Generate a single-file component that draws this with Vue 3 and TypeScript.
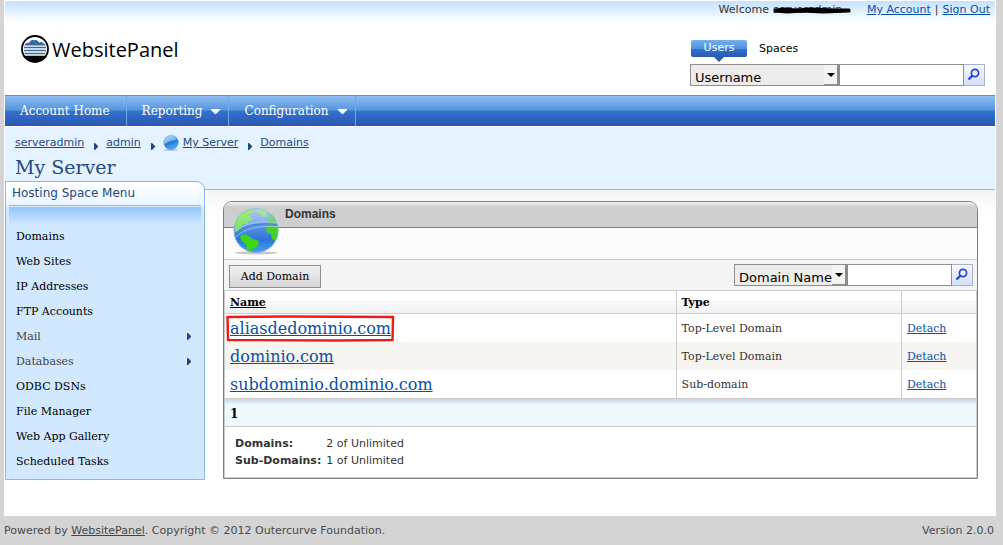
<script setup lang="ts">
import { ref } from 'vue'

interface MenuItem {
  label: string
  children?: boolean
}

interface DomainRow {
  name: string
  type: string
  marked?: boolean
}

const navItems: MenuItem[] = [
  { label: 'Account Home' },
  { label: 'Reporting', children: true },
  { label: 'Configuration', children: true },
]

const crumbs: string[] = ['serveradmin', 'admin', 'My Server', 'Domains']

const spaceMenu: MenuItem[] = [
  { label: 'Domains' },
  { label: 'Web Sites' },
  { label: 'IP Addresses' },
  { label: 'FTP Accounts' },
  { label: 'Mail', children: true },
  { label: 'Databases', children: true },
  { label: 'ODBC DSNs' },
  { label: 'File Manager' },
  { label: 'Web App Gallery' },
  { label: 'Scheduled Tasks' },
]

const domains: DomainRow[] = [
  { name: 'aliasdedominio.com', type: 'Top-Level Domain', marked: true },
  { name: 'dominio.com', type: 'Top-Level Domain' },
  { name: 'subdominio.dominio.com', type: 'Sub-domain' },
]

const userField = ref('Username')
const userQuery = ref('')
const domainField = ref('Domain Name')
const domainQuery = ref('')
</script>

<template>
  <div class="page">
    <div class="sheet">
      <header class="top">
        <div class="account">
          <span>Welcome</span>
          <span class="user">serveradmin
            <svg class="scribble" viewBox="0 0 78 8" aria-hidden="true">
              <path d="M2 4L12 3L22 4L40 3L60 4L76 4M2 5L14 6L30 5L50 6L76 5" fill="none" stroke="#000" stroke-width="3" stroke-linecap="round" />
            </svg>
          </span>
          <a href="#" class="first">My Account</a>
          <span class="bar">|</span>
          <a href="#">Sign Out</a>
        </div>
        <div class="brandrow">
          <a href="#" class="logo">
            <svg width="28" height="28" viewBox="0 0 28 28" aria-hidden="true">
              <circle cx="14" cy="14" r="13" fill="#fff" />
              <path d="M3.500 10.500C4 8.500 6 7.500 8 8C9 5.500 11 4.500 13 5.500C15 4.500 17 5.500 18 7.500C20 6.500 22 7 22.500 8.500C24 8.500 24.500 9.500 24.500 10.500Z" fill="#356b9f" />
              <path d="M3 12.500H25M3 15.500H25M3.500 18.500H24.500" stroke="#356b9f" stroke-width="1.500" />
              <path d="M2 20.800H26C23.500 25 19 27 14 27S4.500 25 2 20.800Z" fill="#000" />
              <circle cx="14" cy="14" r="13" fill="none" stroke="#000" stroke-width="1.800" />
            </svg>
            <span>WebsitePanel</span>
          </a>
          <div class="finder">
            <div class="tabs">
              <button type="button" class="tab on">Users</button>
              <button type="button" class="tab">Spaces</button>
            </div>
            <form class="search wide" @submit.prevent>
              <span class="pick">
                <select v-model="userField" aria-label="Search users by">
                  <option>Username</option>
                </select>
                <i class="drop"></i>
              </span>
              <input v-model="userQuery" type="text" aria-label="User search text">
              <button type="submit" class="go" aria-label="Search users">
                <svg width="14" height="14" viewBox="0 0 14 14"><path d="M5.500 7.500L1.500 11.500" stroke="#2344dc" stroke-width="2.400" /><circle cx="8" cy="5" r="3.600" fill="#eef4ff" stroke="#2344dc" stroke-width="1.700" /></svg>
              </button>
            </form>
          </div>
        </div>
      </header>

      <nav class="nav">
        <a v-for="item in navItems" :key="item.label" href="#">
          {{ item.label }}
          <svg v-if="item.children" width="9" height="5" viewBox="0 0 9 5" aria-hidden="true"><path d="M0 0H9V1L5 5H4L0 1Z" fill="#fff" /></svg>
        </a>
      </nav>

      <section class="heading">
        <div class="crumbs">
          <template v-for="(crumb, i) in crumbs" :key="crumb">
            <svg v-if="i > 0" class="sep" width="4" height="7" viewBox="0 0 4 7" aria-hidden="true"><path d="M0 0H1L4 3V4L1 7H0Z" fill="#1f4a80" /></svg>
            <svg v-if="crumb === 'My Server'" class="orb" width="16" height="16" viewBox="0 0 16 16" aria-hidden="true">
              <defs>
                <linearGradient id="orbFill" x1="0" y1="0" x2="0.400" y2="1"><stop offset="0" stop-color="#a9d4f7" /><stop offset="0.500" stop-color="#4596e4" /><stop offset="0.550" stop-color="#1e78d6" /><stop offset="1" stop-color="#55a8f0" /></linearGradient>
              </defs>
              <ellipse cx="8" cy="15" rx="7" ry="1" fill="#b9cbdc" />
              <circle cx="8" cy="7.500" r="7.500" fill="url(#orbFill)" />
              <path d="M1 8C1 4 4 1 8 1C11 1 13 2.500 14 5C10 5 5 6 1 10Z" fill="#fff" opacity="0.300" />
            </svg>
            <a href="#">{{ crumb }}</a>
          </template>
        </div>
        <h1>My Server</h1>
      </section>

      <div class="columns">
        <aside class="side">
          <h2>Hosting Space Menu</h2>
          <ul>
            <li v-for="item in spaceMenu" :key="item.label">
              <a href="#" :class="{ parent: item.children }">
                {{ item.label }}
                <svg v-if="item.children" width="4" height="7" viewBox="0 0 4 7" aria-hidden="true"><path d="M0 0H1L4 3V4L1 7H0Z" fill="#1f4a80" /></svg>
              </a>
            </li>
          </ul>
        </aside>

        <main class="content">
          <div class="panel">
            <div class="panelhead">
              <svg class="globe" width="48" height="48" viewBox="0 0 48 48" aria-hidden="true">
                <defs>
                  <linearGradient id="sea" x1="0" y1="0" x2="0" y2="1"><stop offset="0" stop-color="#86b0e4" /><stop offset="0.400" stop-color="#5a96e0" /><stop offset="0.700" stop-color="#2b74da" /><stop offset="1" stop-color="#4fa0ee" /></linearGradient>
                  <linearGradient id="shine" x1="0" y1="0" x2="0" y2="1"><stop offset="0" stop-color="#fff" stop-opacity="0.350" /><stop offset="1" stop-color="#fff" stop-opacity="0.100" /></linearGradient>
                  <clipPath id="ball"><circle cx="24" cy="23.500" r="22.500" /></clipPath>
                </defs>
                <ellipse cx="24" cy="45.800" rx="22" ry="1.600" fill="#c9c9c9" />
                <g clip-path="url(#ball)">
                  <circle cx="24" cy="23.500" r="22.500" fill="url(#sea)" />
                  <path d="M3 23L2 14L8 6L16 2L22 3L20 6L16 7L19 10L21 13L17 14L15 17L11 17L9 21L5 26Z" fill="#6bdf48" />
                  <path d="M25 2L32 2L37 5L33 6L35 9L31 10L29 7L26 6Z" fill="#7ddc6a" />
                  <path d="M36 12L39 11L36 8L40 7L44 12L47 20L47 29L43 34L40 32L39 27L35 26L34 20L37 16Z" fill="#47cf28" />
                  <path d="M8 29L12 27L17 29L21 32L27 34L26 39L21 42L18 45L15 43L14 37L9 33Z" fill="#3dd514" />
                  <path d="M0 28C8 17 28 14 48 18V0H0Z" fill="url(#shine)" />
                  <path d="M1 30C9 18 28 15 48 18" fill="none" stroke="#4a84da" stroke-width="1.400" />
                  <path d="M1 27C9 16 28 13 47 16M2 32C11 21 28 18 47 20" fill="none" stroke="#a9cbf6" stroke-width="1" stroke-opacity="0.700" />
                </g>
                <circle cx="24" cy="23.500" r="22" fill="none" stroke="#8fb6e4" stroke-opacity="0.700" />
              </svg>
              <h2>Domains</h2>
            </div>
            <div class="strip"></div>
            <div class="toolbar">
              <button type="button" class="add">Add Domain</button>
              <form class="search" @submit.prevent>
                <span class="pick">
                  <select v-model="domainField" aria-label="Search domains by">
                    <option>Domain Name</option>
                  </select>
                  <i class="drop"></i>
                </span>
                <input v-model="domainQuery" type="text" aria-label="Domain search text">
                <button type="submit" class="go" aria-label="Search domains">
                  <svg width="14" height="14" viewBox="0 0 14 14"><path d="M5.500 7.500L1.500 11.500" stroke="#2344dc" stroke-width="2.400" /><circle cx="8" cy="5" r="3.600" fill="#eef4ff" stroke="#2344dc" stroke-width="1.700" /></svg>
                </button>
              </form>
            </div>
            <div class="inner">
              <table class="grid">
                <thead>
                  <tr>
                    <th class="cname"><a href="#">Name</a></th>
                    <th class="ctype">Type</th>
                    <th class="cact"></th>
                  </tr>
                </thead>
                <tbody>
                  <tr v-for="row in domains" :key="row.name">
                    <td class="cname">
                      <span class="entry">
                        <a href="#">{{ row.name }}</a>
                        <svg v-if="row.marked" class="mark" viewBox="0 0 168 27" preserveAspectRatio="none" aria-hidden="true"><path d="M1.500 2L60 1.500L166 2L165.500 25L110 25.500L2 25Z" fill="none" stroke="#f01818" stroke-width="2.400" /></svg>
                      </span>
                    </td>
                    <td>{{ row.type }}</td>
                    <td><a href="#">Detach</a></td>
                  </tr>
                </tbody>
              </table>
              <div class="pager">1</div>
              <dl class="quota">
                <dt>Domains:</dt>
                <dd>2 of Unlimited</dd>
                <dt>Sub-Domains:</dt>
                <dd>1 of Unlimited</dd>
              </dl>
            </div>
          </div>
        </main>
      </div>
    </div>

    <footer class="foot">
      <span>Powered by <a href="#">WebsitePanel</a>. Copyright © 2012 Outercurve Foundation.</span>
      <span>Version 2.0.0</span>
    </footer>
  </div>
</template>

<style>
html,
body {
  background: #d4d4d4;
}
</style>

<style scoped>
* {
  box-sizing: border-box;
}

.page {
  font: 11px/16px "DejaVu Sans", Verdana, sans-serif;
  color: #333;
  background: #d4d4d4;
}

h1,
h2,
ul,
dl,
dd {
  margin: 0;
  padding: 0;
  font-weight: normal;
}

button,
input,
select {
  margin: 0;
  padding: 0;
  border: 0;
  border-radius: 0;
  font: inherit;
  color: #000;
}

a {
  color: #0850a4;
}

.sheet {
  margin: 0 7px 0 4px;
  padding: 1px 1px 36px;
  background: #fff;
}

.top {
  height: 94px;
  padding: 1px 10px 0 16px;
  background: linear-gradient(#c3e1ff, #fff 21px);
}

.account {
  display: flex;
  justify-content: flex-end;
  padding-right: 5px;
  margin-right: -10px;
}

.user {
  position: relative;
  width: 78px;
  margin-left: 4px;
  white-space: nowrap;
}

.scribble {
  position: absolute;
  left: 0;
  top: 4px;
  width: 78px;
  height: 8px;
}

.account .first {
  margin-left: 16px;
}

.bar {
  margin: 0 4px;
}

.brandrow {
  display: flex;
  justify-content: space-between;
  padding-top: 17px;
}

.logo {
  display: flex;
  align-self: flex-start;
  gap: 3px;
  font: 20px/30px "Open Sans", sans-serif;
  color: #000;
  text-decoration: none;
}

.finder {
  padding-top: 5px;
}

.tabs {
  display: flex;
  gap: 12px;
  height: 24px;
  padding-left: 1px;
}

.tab {
  height: 18px;
  background: none;
}

.tab.on {
  position: relative;
  width: 56px;
  height: 17px;
  padding-bottom: 2px;
  border-radius: 2px;
  color: #fff;
  background: linear-gradient(#79afec, #4f92df 50%, #3172cb 51%, #2b59b4);
}

.tab.on::after {
  content: "";
  position: absolute;
  left: 23px;
  top: 17px;
  border: 5px solid transparent;
  border-top-color: #2b59b4;
  border-bottom: 0;
}

.search {
  display: flex;
  height: 22px;
}

.pick {
  position: relative;
  display: block;
  width: 114px;
}

.wide .pick {
  width: 150px;
}

.pick select {
  width: 100%;
  height: 22px;
  padding: 5px 0 0 4px;
  border: 1px solid #8e8e8e;
  font-size: 13px;
  background: #edecea;
  appearance: none;
}

.drop {
  position: absolute;
  right: 0;
  top: 1px;
  width: 16px;
  height: 20px;
  border: solid #8d8b86;
  border-width: 0 3px 1px 0;
  background: #f5f4f2;
  pointer-events: none;
}

.drop::after {
  content: "";
  position: absolute;
  left: 3px;
  top: 8px;
  border: 4px solid transparent;
  border-top-color: #000;
  border-bottom: 0;
}

.search input {
  width: 104px;
  padding: 0 3px;
  border: 1px solid #8e8e8e;
  border-left: 0;
  background: #fff;
}

.wide input {
  width: 124px;
}

.go {
  display: grid;
  place-items: center;
  width: 21px;
  border: 1px solid #a9b2cc;
  border-left: 0;
  background: linear-gradient(#f6f8ff, #d7def7);
}

.nav {
  display: flex;
  height: 31px;
  border-top: 1px solid #4d92dc;
  background: linear-gradient(#8dbdf0, #5594df 48%, #3374cd 49%, #2a55b1);
}

.nav a {
  display: flex;
  align-items: center;
  gap: 9px;
  padding: 0 8px 0 15px;
  border-right: 1px solid #6fa8e6;
  font: 12px/20px "DejaVu Serif", serif;
  color: #fff;
  text-decoration: none;
}

.nav a:first-child {
  padding-right: 16px;
}

.heading {
  height: 63px;
  margin-top: 1px;
  padding: 8px 10px 0;
  border-bottom: 1px solid #84b9f5;
  background: #e5f2ff;
}

.crumbs {
  display: flex;
  align-items: center;
}

.crumbs a {
  color: #1f4a80;
}

.sep {
  margin: 6px 8px 0 10px;
}

.orb {
  margin-right: 4px;
}

h1 {
  font: 19px/26px "DejaVu Serif", serif;
  padding-top: 3px;
  color: #1f4a80;
}

.columns {
  display: flex;
  align-items: flex-start;
}

.side {
  flex: 0 0 200px;
  margin-top: -9px;
  padding: 0 3px 5px;
  border: 1px solid #84b9f5;
  border-top-right-radius: 9px;
  background: linear-gradient(#fff, #e9f4ff 24px, #d1e8ff 25px);
}

.side h2 {
  height: 24px;
  padding-left: 3px;
  border-bottom: 1px solid #84b9f5;
  font-size: 12px;
  line-height: 23px;
  color: #1f4a80;
}

.side ul {
  margin-top: 1px;
  padding-top: 17px;
  list-style: none;
  background: linear-gradient(#93c6fb, #d1e8ff 18px);
}

.side li a {
  display: flex;
  align-items: center;
  justify-content: space-between;
  padding: 0 10px 0 7px;
  font: 11px/25px "DejaVu Serif", serif;
  color: #000;
  text-decoration: none;
}

.side li a.parent {
  color: #444;
}

.content {
  flex: 1;
  margin-left: 3px;
  padding: 11px 17px 0 15px;
  background: linear-gradient(#f3f3f3, #fff 22px);
}

.panel {
  border: 1px solid #7f7f7f;
  border-radius: 9px 9px 0 0;
}

.panelhead {
  position: relative;
  height: 26px;
  padding-left: 61px;
  border-bottom: 1px solid #7f7f7f;
  border-radius: 8px 8px 0 0;
  background: linear-gradient(#f2f2f2, #cecece 5px);
}

.panelhead h2 {
  font: bold 12px/24px "Liberation Sans", Arial, sans-serif;
}

.globe {
  position: absolute;
  left: 8px;
  top: 5px;
}

.strip {
  height: 32px;
  border-bottom: 1px solid #ccc;
  background: #fcfcfc;
}

.toolbar {
  display: flex;
  justify-content: space-between;
  align-items: flex-start;
  height: 30px;
  padding: 4px 4px 0 5px;
  background: #f4f4f4;
}

.add {
  width: 92px;
  height: 23px;
  margin-top: 1px;
  padding-top: 1px;
  border: 1px solid #8e8e8e;
  font: 11px/20px "DejaVu Serif", serif;
  background: linear-gradient(#f1f1f1, #d6d6d6);
}

.inner {
  border: 1px solid #ccc;
}

.grid {
  width: 100%;
  border-collapse: separate;
  border-spacing: 0;
  table-layout: fixed;
  font: 11px/20px "DejaVu Serif", serif;
  background: #fff;
}

.grid th {
  height: 23px;
  padding: 2px 5px 0;
  border-bottom: 1px solid #ccc;
  text-align: left;
  color: #000;
  background: linear-gradient(#fff 40%, #f8f9fb 41%, #f0f1f3);
}

.grid th a {
  color: #000;
}

.grid td {
  height: 28px;
  padding: 2px 5px 0;
}

.grid th + th,
.grid td + td {
  border-left: 1px solid #ccc;
}

.grid .ctype {
  width: 30%;
}

.grid .cact {
  width: 10%;
}

.grid tbody tr:nth-child(even) {
  background: #f7f5f1;
}

.grid td.cname {
  font-size: 16px;
}

.entry {
  position: relative;
  display: inline-block;
}

.mark {
  position: absolute;
  left: -4px;
  top: -4px;
  width: calc(100% + 8px);
  height: 27px;
}

.pager {
  height: 29px;
  padding: 1px 5px 0;
  border: solid #ccc;
  border-width: 1px 0;
  font: bold 12px/28px "DejaVu Serif", serif;
  color: #000;
  background: linear-gradient(#c2d6e2, #effaff 6px);
}

.quota {
  display: grid;
  grid-template-columns: max-content 1fr;
  column-gap: 5px;
  padding: 8px 10px;
  line-height: 17px;
  background: #fff;
}

.quota dt {
  font-weight: bold;
}

.foot {
  display: flex;
  justify-content: space-between;
  padding: 7px 9px 6px 4px;
  color: #4a4a4a;
}

.foot a {
  color: #444;
}
</style>
